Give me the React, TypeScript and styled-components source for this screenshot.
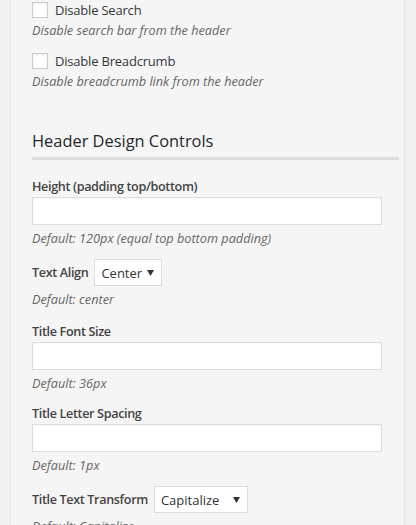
import React from "react";
import styled, { createGlobalStyle } from "styled-components";

const Global = createGlobalStyle`
  html, body { margin: 0; padding: 0; background: #f1f1f1; }
  body { font-family: "Open Sans", "Noto Sans", sans-serif; color: #444; }
  * { box-sizing: border-box; }
`;

const Page = styled.div`
  display: flex;
  height: 525px;
  overflow: hidden;
`;

const Gutter = styled.div<{ $side: "left" | "right" }>`
  width: ${(p) => (p.$side === "left" ? "11px" : "12px")};
  flex: none;
  background: #f1f1f1;
  ${(p) => (p.$side === "left" ? "border-right: 1px solid #e4e4e4;" : "border-left: 1px solid #e4e4e4;")}
`;

const Panel = styled.div`
  flex: 1;
  background: #f6f5f5;
  padding: 0 5px 0 21px;
`;

const Control = styled.div<{ $gap?: number }>`
  margin-bottom: ${(p) => p.$gap ?? 10}px;
`;

const CheckRow = styled.label`
  display: flex;
  align-items: center;
  gap: 7px;
  height: 20px;
  font-size: 13px;
  letter-spacing: -0.2px;
  color: #32373c;
`;

const Box = styled.span`
  width: 16px;
  height: 16px;
  flex: none;
  background: #fff;
  border: 1px solid #c9cccf;
  box-shadow: inset 0 1px 2px rgba(0, 0, 0, 0.07);
`;

const Desc = styled.div<{ $top?: number }>`
  font-size: 12.7px;
  font-style: italic;
  line-height: 21px;
  color: #666;
  margin-top: ${(p) => p.$top ?? 0}px;
`;

const Heading = styled.h3`
  margin: 37px 0 17px;
  padding-bottom: 4px;
  font-size: 16.4px;
  font-weight: 400;
  line-height: 24px;
  color: #23282d;
  border-bottom: 3px solid #dedddd;
`;

const Label = styled.div`
  font-size: 12.6px;
  font-weight: 600;
  letter-spacing: -0.35px;
  line-height: 20px;
  color: #444;
`;

const TextInput = styled.input`
  display: block;
  width: 350px;
  height: 28px;
  margin: 0;
  background: #fff;
  border: 1px solid #dddddd;
  box-shadow: inset 0 1px 2px rgba(0, 0, 0, 0.04);
  outline: none;
`;

const SelectRow = styled.div`
  display: flex;
  align-items: center;
  gap: 6px;
`;

const SelectBox = styled.div<{ $width: number }>`
  display: flex;
  align-items: center;
  justify-content: space-between;
  width: ${(p) => p.$width}px;
  height: 27px;
  padding: 0 7px 0 6px;
  background: #fff;
  border: 1px solid #dddddd;
  font-size: 13px;
  color: #333;
`;

const Arrow = () => (
  <svg width="7" height="6" viewBox="0 0 7 6">
    <path d="M0 0 H7 L3.5 6 Z" fill="#333" />
  </svg>
);

const Check = ({ label, desc }: { label: string; desc: string }) => (
  <Control>
    <CheckRow>
      <Box />
      {label}
    </CheckRow>
    <Desc>{desc}</Desc>
  </Control>
);

const Field = ({ label, desc }: { label: string; desc: string }) => (
  <Control>
    <Label>{label}</Label>
    <TextInput type="text" />
    <Desc $top={3}>{desc}</Desc>
  </Control>
);

const Choice = ({ label, value, width, desc }: { label: string; value: string; width: number; desc: string }) => (
  <Control $gap={12}>
    <SelectRow>
      <Label>{label}</Label>
      <SelectBox $width={width}>
        {value}
        <Arrow />
      </SelectBox>
    </SelectRow>
    <Desc $top={3}>{desc}</Desc>
  </Control>
);

export default function App() {
  return (
    <>
      <Global />
      <Page>
        <Gutter $side="left" />
        <Panel>
          <Check label="Disable Search" desc="Disable search bar from the header" />
          <Check label="Disable Breadcrumb" desc="Disable breadcrumb link from the header" />
          <Heading>Header Design Controls</Heading>
          <Field label="Height (padding top/bottom)" desc="Default: 120px (equal top bottom padding)" />
          <Choice label="Text Align" value="Center" width={68} desc="Default: center" />
          <Field label="Title Font Size" desc="Default: 36px" />
          <Field label="Title Letter Spacing" desc="Default: 1px" />
          <Choice label="Title Text Transform" value="Capitalize" width={94} desc="Default: Capitalize" />
        </Panel>
        <Gutter $side="right" />
      </Page>
    </>
  );
}
